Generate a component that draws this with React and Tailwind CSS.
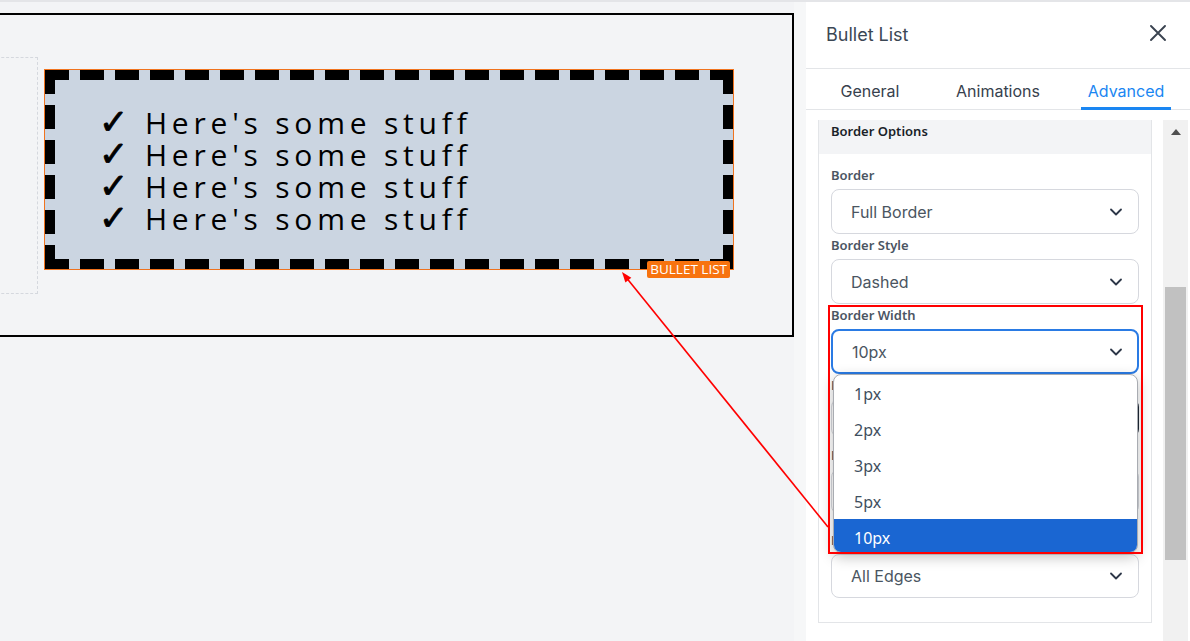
import React from "react";

const Chevron = () => (
  <svg width="20" height="20" viewBox="0 0 24 24" fill="none" stroke="#2d3748" strokeWidth="2.2" strokeLinecap="round" strokeLinejoin="round">
    <path d="m6 9 6 6 6-6" />
  </svg>
);

function Select({ value, focused }) {
  return (
    <div
      className={
        "h-[45px] rounded-[8px] flex items-center justify-between bg-white " +
        (focused ? "border-2 border-[#2a7be4] pl-[19px] pr-[11px]" : "border border-[#d6d8de] pl-[19px] pr-[12px]")
      }
    >
      <span className="text-[16px] text-[#4a5561] font-['Inter',sans-serif]">{value}</span>
      <Chevron />
    </div>
  );
}

function Label({ children }) {
  return (
    <div className="h-[20px] mb-[4px] leading-[20px] text-[13px] font-semibold text-[#4b5563] font-['Noto_Sans',sans-serif]">
      {children}
    </div>
  );
}

const lines = [0, 1, 2, 3];

export default function App() {
  return (
    <div className="w-[1190px] h-[641px] overflow-hidden relative flex flex-col bg-[#f3f4f6]">
      <div className="h-[2px] bg-[#e4e5e8] shrink-0" />
      <div className="flex flex-1 min-h-0">
        {/* Canvas */}
        <div className="w-[794px] shrink-0 bg-[#f3f4f6] pt-[11px] overflow-hidden">
          <div className="ml-[-20px] w-[814px] h-[324px] border-2 border-black flex items-start">
            <div className="mt-[42px] w-[56px] h-[237px] border border-dashed border-[#d5d8de] shrink-0" />
            <div className="mt-[55px] ml-[7px] w-[688px] h-[199px] relative outline outline-1 outline-[#f0731e] shrink-0">
              <div className="w-full h-full p-[10px] pt-[13px] pl-[54px] flex flex-col justify-center bg-[#cbd5e1] bg-no-repeat [background-image:repeating-linear-gradient(90deg,#000_0_24px,transparent_24px_35px),repeating-linear-gradient(90deg,#000_0_24px,transparent_24px_35px),repeating-linear-gradient(180deg,#000_0_24px,transparent_24px_35px),repeating-linear-gradient(180deg,#000_0_24px,transparent_24px_35px)] [background-size:100%_10px,100%_10px,10px_100%,10px_100%] [background-position:left_top,left_bottom,left_top,right_top]">
                {lines.map((i) => (
                  <div
                    key={i}
                    className="h-[32px] text-[30px] leading-[32px] tracking-[4.8px] text-black whitespace-nowrap font-['Open_Sans',sans-serif]"
                  >
                    <span className="font-['DejaVu_Sans',sans-serif] font-bold text-[35px] leading-[0] tracking-normal [-webkit-text-stroke:0.9px_#000]">✓</span>
                    <span className="ml-[4px]"> Here's some stuff</span>
                  </div>
                ))}
              </div>
              <div className="absolute right-[3px] top-[191px] h-[17px] px-[3px] rounded-[2px] bg-[#f7730f] text-white text-[13.5px] leading-[17px] font-['Open_Sans',sans-serif] whitespace-nowrap">
                BULLET LIST
              </div>
            </div>
          </div>
        </div>

        {/* strip */}
        <div className="w-[12px] shrink-0 bg-[#f6f7f8]" />

        {/* Panel */}
        <div className="w-[384px] shrink-0 bg-white flex flex-col">
          <div className="h-[67px] shrink-0 border-b border-[#e3e5e8] flex items-center justify-between pl-[20px] pr-[24px]">
            <span className="text-[18px] text-[#3b4754] font-['Inter',sans-serif] mt-[-2px]">Bullet List</span>
            <svg width="16" height="16" viewBox="0 0 16 16" className="mt-[-4px]">
              <path d="M1 1 L15 15 M15 1 L1 15" stroke="#3a4350" strokeWidth="1.9" strokeLinecap="round" />
            </svg>
          </div>
          <div className="h-[41px] shrink-0 border-b border-[#e3e5e8] flex">
            {["General", "Animations", "Advanced"].map((t) => (
              <div key={t} className="flex-1 relative flex items-center justify-center pt-[3px]">
                <span
                  className={
                    "text-[16px] font-['Inter',sans-serif] " + (t === "Advanced" ? "text-[#1a86f2]" : "text-[#37414d]")
                  }
                >
                  {t}
                </span>
                {t === "Advanced" && (
                  <div className="absolute bottom-[-1px] left-[19px] w-[90px] h-[3px] bg-[#1a86f2]" />
                )}
              </div>
            ))}
          </div>
          <div className="flex flex-1 min-h-0 pt-[10px] pl-[12px]">
            {/* Card */}
            <div className="w-[334px] h-[503px] border border-[#e3e5e8] border-t-0 shrink-0 flex flex-col">
              <div className="h-[34px] bg-[#f3f4f6] px-[12px] pt-[1px] leading-[20px] text-[13px] font-semibold text-[#1a1f29] font-['Noto_Sans',sans-serif]">
                Border Options
              </div>
              <div className="px-[12px] pt-[11px] flex flex-col gap-[1px] relative">
                <div>
                  <Label>Border</Label>
                  <Select value="Full Border" />
                </div>
                <div>
                  <Label>Border Style</Label>
                  <Select value="Dashed" />
                </div>
                <div className="relative">
                  <Label>Border Width</Label>
                  <Select value="10px" focused />
                  {/* dropdown */}
                  <div className="absolute left-[2px] top-[69px] w-[305px] h-[179px] rounded-[8px] border border-[#a9acb2] bg-white overflow-hidden z-10 shadow-[0_4px_14px_rgba(0,0,0,0.25)] font-['Noto_Sans',sans-serif]">
                    {["1px", "2px", "3px", "5px", "10px"].map((o) => (
                      <div
                        key={o}
                        className={
                          "h-[36px] flex items-center pl-[20px] pt-[1px] text-[16px] " +
                          (o === "10px" ? "bg-[#1a66d2] text-white" : "text-[#3f4f60]")
                        }
                      >
                        {o}
                      </div>
                    ))}
                  </div>
                </div>
                {/* hidden fields behind dropdown */}
                <div className="h-[154px] flex flex-col">
                  <Label>Border Color</Label>
                  <div className="h-[38px] rounded-[8px] border border-[#d6d8de] border-r-[#1f2937]" />
                  <div className="mt-[8px]">
                    <Label>Border Radius</Label>
                    <div className="h-[45px] rounded-[8px] border border-[#d6d8de]" />
                  </div>
                </div>
                <div>
                  <Label>Border Edges</Label>
                  <div className="h-[44px] rounded-[8px] border border-[#d6d8de] flex items-center justify-between pl-[19px] pr-[12px]">
                    <span className="text-[16px] text-[#4a5561] font-['Inter',sans-serif]">All Edges</span>
                    <Chevron />
                  </div>
                </div>
              </div>
            </div>
            <div className="w-[11px] shrink-0" />
            {/* scrollbar */}
            <div className="w-[25px] shrink-0 bg-[#f1f1f1] flex flex-col items-center">
              <svg width="10" height="6" viewBox="0 0 10 6" className="mt-[9px]">
                <path d="M0 6 L5 0 L10 6 Z" fill="#505050" />
              </svg>
              <div className="mt-[152px] w-[21px] h-[273px] bg-[#c1c1c1]" />
            </div>
          </div>
        </div>
      </div>

      {/* red annotation rectangle */}
      <div className="absolute left-[828px] top-[305px] w-[315px] h-[249px] border-2 border-[#ff0000] pointer-events-none z-20" />
      {/* red arrow */}
      <svg className="absolute left-0 top-0 pointer-events-none z-20" width="1190" height="641">
        <line x1="828" y1="527" x2="625" y2="276" stroke="#ff0000" strokeWidth="1.6" />
        <polygon points="622,272 625.4,282.5 631.3,277.7" fill="#ff0000" />
      </svg>
    </div>
  );
}
